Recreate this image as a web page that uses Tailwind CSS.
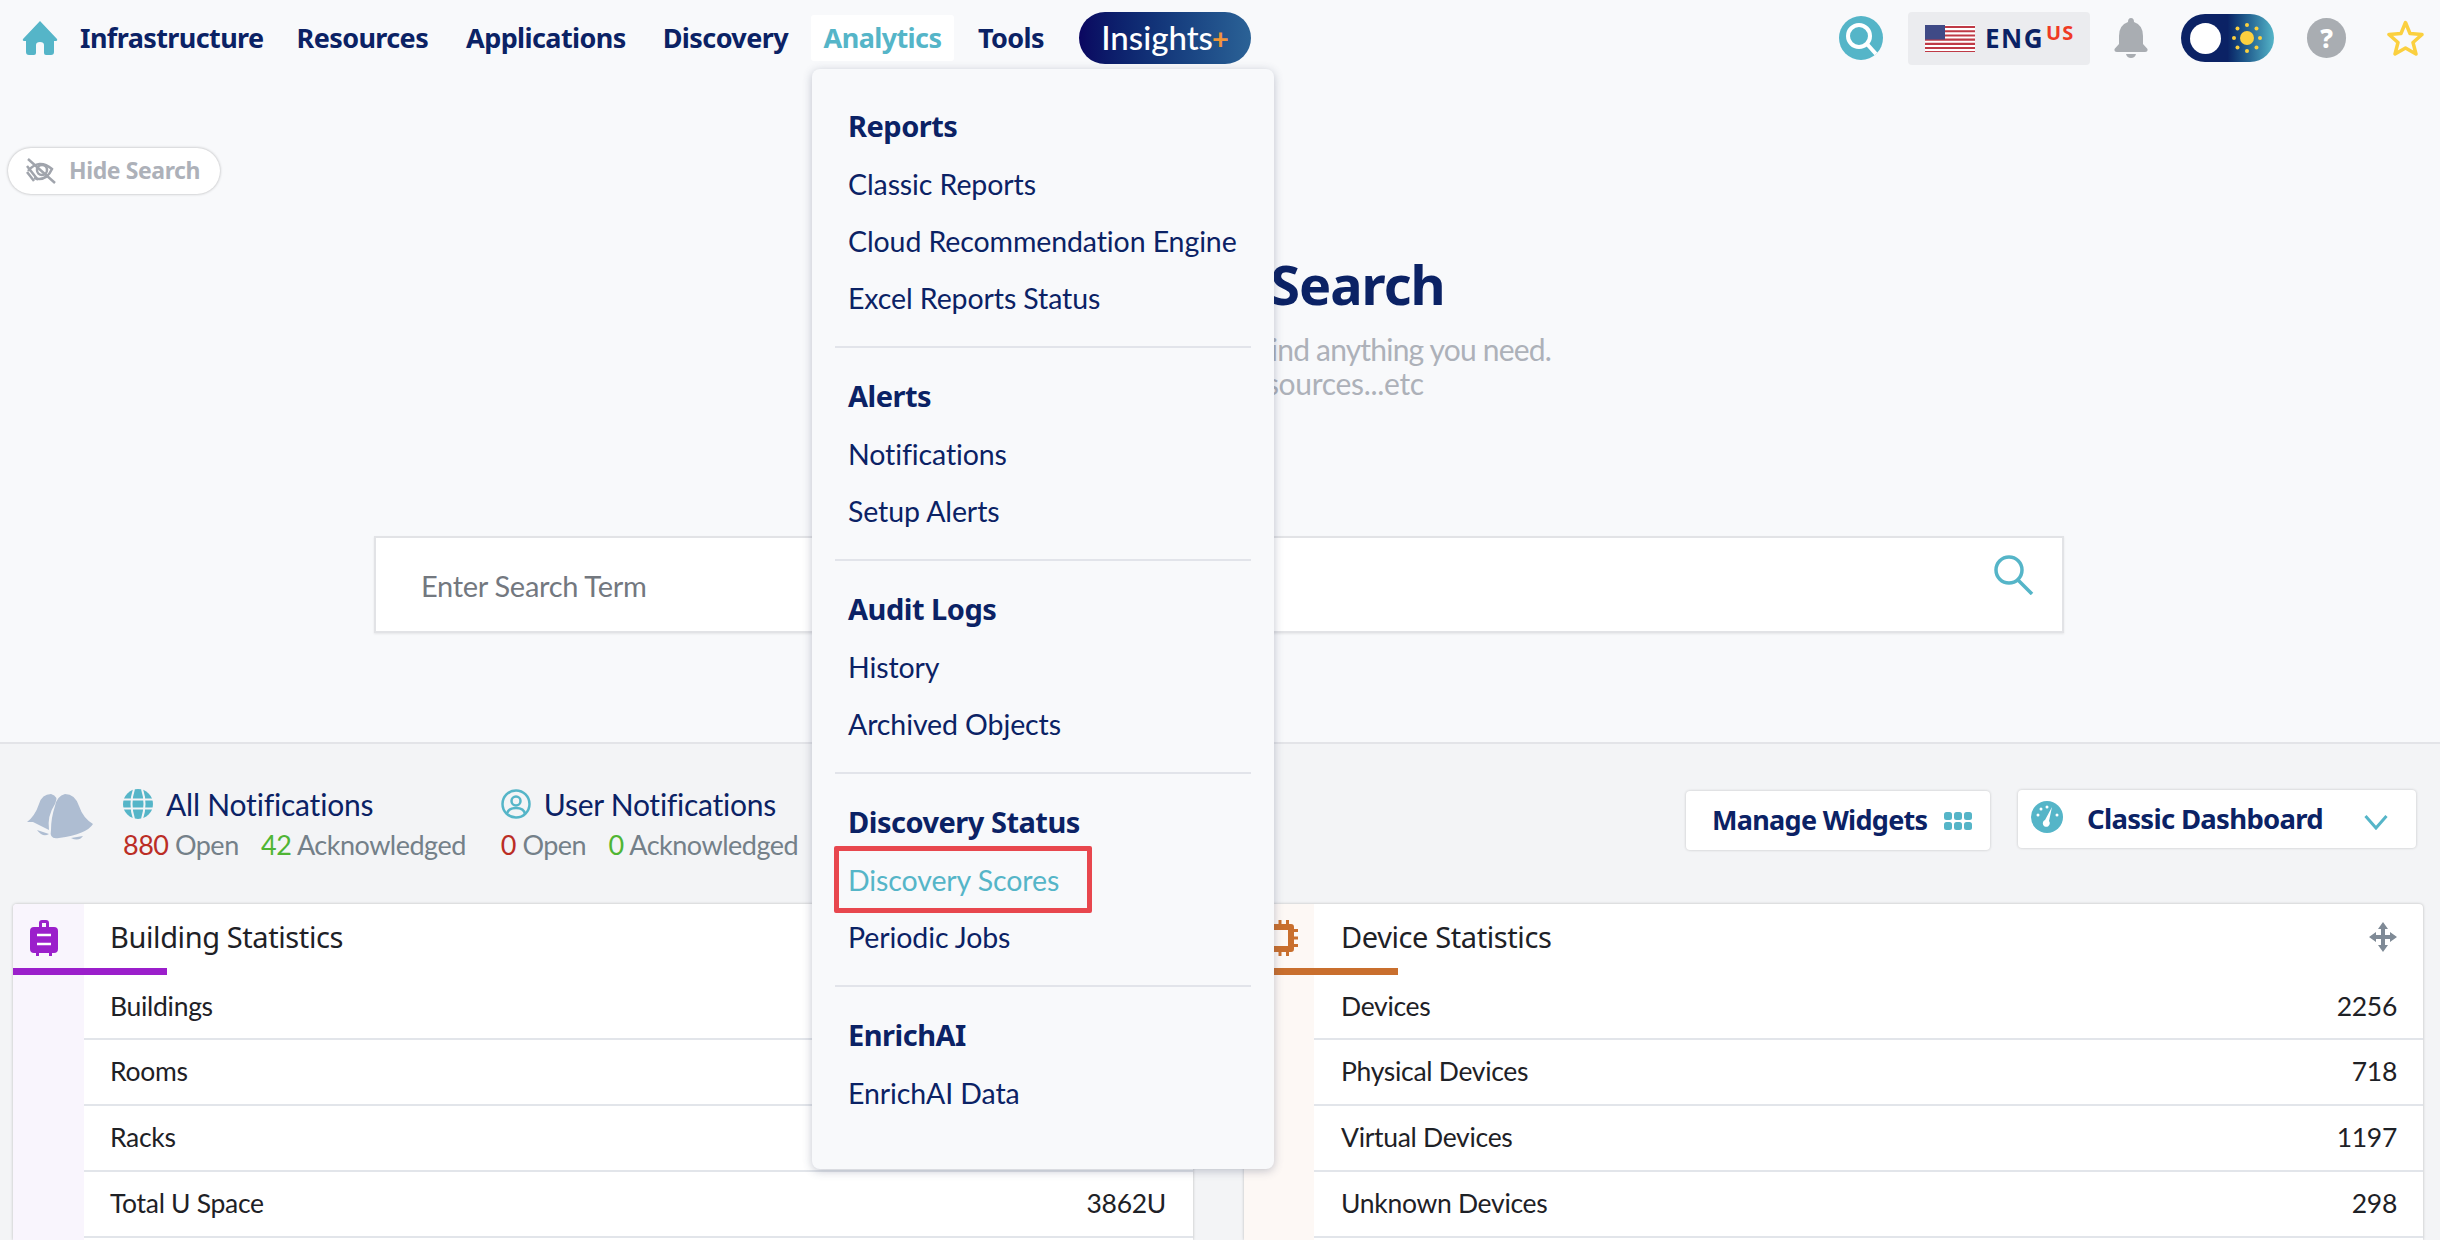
<!DOCTYPE html>
<html lang="en">
<head>
    <meta charset="UTF-8">
    <meta name="viewport" content="width=device-width, initial-scale=1.0">
    <title>Search</title>
    <script src="https://cdn.jsdelivr.net/npm/@tailwindcss/browser@4"></script>
</head>
<body class="bg-[#f8f9fb] font-['Lato',sans-serif] text-[#0b2265]">
<div class="relative w-[2440px] h-[1240px] overflow-hidden">

    <!-- top nav -->
    <header class="h-[76px] flex items-center pl-[22px] pr-[16px] font-['Noto_Sans',sans-serif] font-bold text-[27px] tracking-[-0.6px]">
        <svg class="w-[36px] h-[36px] mr-[22px]" viewBox="0 0 36 36" fill="#55b5c8"><path d="M18 1 L35 19 Q36 21 33 21 H32 V32 Q32 35 29 35 H24 Q22 35 22 33 V25 Q22 22 18 22 Q14 22 14 25 V33 Q14 35 12 35 H7 Q4 35 4 32 V21 H3 Q0 21 1 19 Z"/></svg>
        <a class="mr-[33px]">Infrastructure</a>
        <a class="mr-[38px]">Resources</a>
        <a class="mr-[37px]">Applications</a>
        <a class="mr-[23px]">Discovery</a>
        <a class="w-[143px] h-[46px] bg-white rounded-[3px] flex items-center justify-center text-[#55b5c8] mr-[24px]">Analytics</a>
        <a class="mr-[35px]">Tools</a>
        <div class="w-[172px] h-[52px] rounded-full bg-gradient-to-r from-[#0b0660] to-[#2b6296] flex items-center justify-center text-white font-medium text-[33px] font-['Lato',sans-serif] tracking-normal">Insights<span class="text-[#f0953a] font-bold -ml-[1px] text-[29px]">+</span></div>

        <div class="ml-auto flex items-center">
            <svg class="w-[44px] h-[44px]" viewBox="0 0 44 44"><circle cx="22" cy="22" r="22" fill="#55b5c8"/><circle cx="20" cy="20" r="11" fill="none" stroke="#fff" stroke-width="4"/><path d="M28 28 L37 38" stroke="#fff" stroke-width="4"/></svg>
            <div class="ml-[25px] w-[182px] h-[53px] rounded-[4px] bg-[#ebecef] flex items-center pl-[17px]">
                <svg class="w-[50px] h-[27px]" viewBox="0 0 50 27">
                    <rect width="50" height="27" fill="#fff"/>
                    <path d="M0 1h50v2.1H0zM0 5.2h50v2.1H0zM0 9.4h50v2.1H0zM0 13.6h50v2.1H0zM0 17.8h50v2.1H0zM0 22h50v2.1H0zM0 25.9h50V27H0z" fill="#bf3a46"/>
                    <rect width="20" height="14.5" fill="#3f4a86"/>
                </svg>
                <span class="ml-[10px] font-['Noto_Sans',sans-serif] font-bold text-[26px] tracking-[1.5px] text-[#0b2265]">ENG</span>
                <span class="ml-[2px] -mt-[10px] font-['Noto_Sans',sans-serif] font-bold text-[20px] tracking-[1px] text-[#ef3a25]">US</span>
            </div>
            <svg class="ml-[24px] w-[34px] h-[40px]" viewBox="0 0 34 40" fill="#a9adb2"><path d="M17 0 Q20 0 20 4 Q29 7 29 18 V26 L33.500 31 Q34 34 31 34 H3 Q0 34 0.500 31 L5 26 V18 Q5 7 14 4 Q14 0 17 0Z"/><path d="M12 36 H22 Q21 40 17 40 Q13 40 12 36Z"/></svg>
            <div class="ml-[33px] w-[93px] h-[48px] rounded-full bg-gradient-to-r from-[#0b2265] via-[#0b2265] to-[#55b5c8] flex items-center pl-[9px]">
                <div class="w-[31px] h-[31px] rounded-full bg-white"></div>
                <svg class="ml-[11px] w-[30px] h-[30px]" viewBox="0 0 30 30" fill="#fbd03f"><circle cx="15" cy="15" r="7"/><circle cx="15" cy="2" r="2"/><circle cx="15" cy="28" r="2"/><circle cx="2" cy="15" r="2"/><circle cx="28" cy="15" r="2"/><circle cx="5.500" cy="5.500" r="2"/><circle cx="24.500" cy="5.500" r="2"/><circle cx="5.500" cy="24.500" r="2"/><circle cx="24.500" cy="24.500" r="2"/></svg>
            </div>
            <div class="ml-[33px] w-[39px] h-[40px] rounded-full bg-[#a9adb2] flex items-center justify-center text-white font-['Noto_Sans',sans-serif] font-extrabold text-[26px] tracking-normal">?</div>
            <svg class="ml-[41px] w-[37px] h-[36px]" viewBox="0 0 37 36" fill="none" stroke="#fbd03f" stroke-width="3.500" stroke-linejoin="round"><path d="M18.500 2.500 L23 13.500 L35 14.500 L26 22.500 L29 34 L18.500 28 L8 34 L11 22.500 L2 14.500 L14 13.500 Z"/></svg>
        </div>
    </header>

    <!-- search hero -->
    <section class="h-[668px] border-b-2 border-[#e3e4e8] pt-[72px] flex flex-col">
        <div class="ml-[8px] w-[212px] h-[46px] rounded-full bg-white shadow-[0_0_3px_rgba(0,0,0,0.3)] flex items-center pl-[18px] pb-[1px] text-[#adb1b9] font-['Noto_Sans',sans-serif] font-bold text-[23px] tracking-[-0.4px]">
            <svg class="w-[30px] h-[26px] mr-[13px]" viewBox="0 0 30 26" fill="none" stroke="#a0a4ac" stroke-width="2.500"><path d="M2 13 Q13 0 26 11 Q20 24 8 20" /><circle cx="16" cy="12" r="5"/><path d="M2 1 L29 25" /><path d="M1 8 L12 22M1 14 L8 23" /></svg>
            Hide Search
        </div>
        <h1 class="mt-[60px] h-[60px] pl-[16px] text-center leading-[60px] font-['Noto_Sans',sans-serif] font-bold text-[54px] tracking-[-1px]">Universal Search</h1>
        <p class="mt-[18px] pl-[8px] text-center text-[#adb1b9] text-[30px] leading-[34px]">
            <span class="block pl-[11px] tracking-[-0.8px]">Use this global search bar to find anything you need.</span>
            <span class="block pr-[24px] tracking-[-0.3px]">Buildings, devices, resources...etc</span>
        </p>
        <div class="mt-[136px] ml-[374px] w-[1690px] h-[97px] bg-white border-2 border-[#e2e3e6] shadow-[0_1px_2px_rgba(0,0,0,0.08)] flex items-center pl-[45px] pr-[28px]">
            <span class="pt-[2px] text-[#73787f] text-[29px] tracking-[-0.3px]">Enter Search Term</span>
            <svg class="ml-auto -mt-[20px] w-[40px] h-[40px]" viewBox="0 0 40 40" fill="none" stroke="#55b5c8" stroke-width="3.500"><circle cx="15" cy="15" r="13"/><path d="M24 25 L38 39"/></svg>
        </div>
    </section>

    <!-- notifications + dashboard controls -->
    <section class="bg-[#f3f4f6] h-[496px]">
        <div class="h-[160px] flex items-start pl-[27px] pr-[24px]">
            <svg class="mt-[50px] w-[66px] h-[48px]" viewBox="0 0 66 48" fill="#aebdd2"><path d="M24 0 Q32 2 28 10 Q20 22 22 36 L6 28 L0 28 Q8 22 12 10 Q15 0 24 0Z"/><path d="M38 0 Q48 0 52 12 Q56 24 66 30 Q60 40 32 44 Q22 46 24 36 Q24 24 28 12 Q30 2 38 0Z"/><path d="M10 36 L22 40 Q16 44 10 36ZM44 44 L56 42 Q52 48 44 44Z"/></svg>
            <div class="ml-[30px] mt-[44px]">
                <div class="flex items-center h-[32px]">
                    <svg class="w-[30px] h-[30px] mr-[13px]" viewBox="0 0 30 30" fill="#55b5c8"><circle cx="15" cy="15" r="15"/><path d="M0 10.500H30M0 19.500H30M11 0Q6 15 11 30M19 0Q24 15 19 30" stroke="#f3f4f6" stroke-width="2" fill="none"/></svg>
                    <span class="text-[30px] tracking-[-0.2px]">All Notifications</span>
                </div>
                <div class="mt-[9px] text-[27px] leading-[32px] tracking-[-0.5px] text-[#748089] whitespace-nowrap"><span class="text-[#bb2d25]">880</span> Open <span class="ml-[16px] text-[#4fb534]">42</span> Acknowledged</div>
            </div>
            <div class="ml-[35px] mt-[44px]">
                <div class="flex items-center h-[32px]">
                    <svg class="w-[30px] h-[30px] mr-[13px]" viewBox="0 0 30 30" fill="none" stroke="#55b5c8" stroke-width="2.500"><circle cx="15" cy="15" r="13.500"/><circle cx="15" cy="12" r="4.500"/><path d="M6 25 Q7 19 15 19 Q23 19 24 25"/></svg>
                    <span class="text-[30px] tracking-[-0.25px]">User Notifications</span>
                </div>
                <div class="mt-[9px] text-[27px] leading-[32px] tracking-[-0.5px] text-[#748089] whitespace-nowrap"><span class="text-[#bb2d25]">0</span> Open <span class="ml-[16px] text-[#4fb534]">0</span> Acknowledged</div>
            </div>
            <div class="ml-auto mt-[47px] flex items-start font-['Noto_Sans',sans-serif] font-bold text-[27px] tracking-[-0.7px]">
                <div class="w-[304px] h-[59px] bg-white rounded-[4px] shadow-[0_0_3px_rgba(0,0,0,0.2)] flex items-center pl-[26px]">
                    Manage Widgets
                    <svg class="ml-[17px] w-[28px] h-[18px]" viewBox="0 0 28 18" fill="#55b5c8"><rect width="8" height="8" rx="2.500"/><rect x="10" width="8" height="8" rx="2.500"/><rect x="20" width="8" height="8" rx="2.500"/><rect y="10" width="8" height="8" rx="2.500"/><rect x="10" y="10" width="8" height="8" rx="2.500"/><rect x="20" y="10" width="8" height="8" rx="2.500"/></svg>
                </div>
                <div class="ml-[28px] w-[398px] h-[58px] -mt-[1px] bg-white rounded-[4px] shadow-[0_0_3px_rgba(0,0,0,0.2)] flex items-center pl-[13px] pr-[28px]">
                    <svg class="w-[32px] h-[32px] -mt-[4px] mr-[24px]" viewBox="0 0 32 32"><circle cx="16" cy="16" r="16" fill="#55b5c8"/><path d="M21 6 L18 20 A3.500 3.500 0 1 1 14 19 Z" fill="#fff"/><circle cx="7" cy="14" r="1.500" fill="#fff"/><circle cx="10" cy="8" r="1.500" fill="#fff"/><circle cx="16" cy="6" r="1.500" fill="#fff"/><circle cx="26" cy="14" r="1.500" fill="#fff"/></svg>
                    <span class="text-[27.5px]">Classic Dashboard</span>
                    <svg class="ml-auto mt-[6px] w-[24px] h-[15px]" viewBox="0 0 24 15" fill="none" stroke="#55b5c8" stroke-width="3"><path d="M1.500 1 L12 13 L22.500 1"/></svg>
                </div>
            </div>
        </div>

        <div class="flex pl-[13px] items-start gap-[51px]">
            <div class="w-[1180px] h-[336px] bg-white rounded-t-[4px] shadow-[0_0_3px_rgba(0,0,0,0.25)] relative overflow-hidden flex">
                <div class="w-[71px] bg-[#f9f5fd] shrink-0 flex justify-center pt-[16px] pr-[9px]">
                    <svg class="w-[28px] h-[36px]" viewBox="0 0 28 36" fill="#9b1fcb"><path d="M9 7 V3 Q9 0 12 0 H16 Q19 0 19 3 V7 H24 Q28 7 28 11 V29 Q28 33 24 33 H22 V36 H19 V33 H9 V36 H6 V33 H4 Q0 33 0 29 V11 Q0 7 4 7Z M12 7 H16 V3 H12Z"/><path d="M7 15 H21M7 24 H21" stroke="#fff" stroke-width="2.500"/></svg>
                </div>
                <div class="absolute left-0 top-[64px] w-[154px] h-[7px] bg-[#9b1fcb]"></div>
                <div class="flex-1 text-[26.5px] tracking-[-0.3px] text-[#1e2126]">
                    <div class="h-[71px] pl-[26px] pb-[5px] flex items-center text-[#1e2126] font-['Noto_Sans',sans-serif] text-[29px] tracking-[-0.4px]">Building Statistics</div>
                    <div class="h-[65px] pl-[26px] pr-[27px] border-b-2 border-[#e2e5ea] flex items-center justify-between"><span>Buildings</span></div>
                    <div class="h-[66px] pl-[26px] pr-[27px] border-b-2 border-[#e2e5ea] flex items-center justify-between"><span>Rooms</span></div>
                    <div class="h-[66px] pl-[26px] pr-[27px] border-b-2 border-[#e2e5ea] flex items-center justify-between"><span>Racks</span></div>
                    <div class="h-[66px] pl-[26px] pr-[27px] border-b-2 border-[#e2e5ea] flex items-center justify-between"><span>Total U Space</span><span>3862U</span></div>
                </div>
            </div>
            <div class="w-[1179px] h-[336px] bg-white rounded-t-[4px] shadow-[0_0_3px_rgba(0,0,0,0.25)] relative overflow-hidden flex">
                <div class="w-[70px] bg-[#fdf8f5] shrink-0 pt-[16px] pl-[18px]">
                    <svg class="w-[36px] h-[36px]" viewBox="0 0 36 36" fill="#c96f2e"><path fill-rule="evenodd" d="M7 4 H29 Q32 4 32 7 V29 Q32 32 29 32 H7 Q4 32 4 29 V7 Q4 4 7 4Z M10 10 V26 H26 V10Z"/><path d="M9 0h3v4H9zM16.500 0h3v4h-3zM24 0h3v4h-3zM9 32h3v4H9zM16.500 32h3v4h-3zM24 32h3v4h-3zM0 9h4v3H0zM0 16.500h4v3H0zM0 24h4v3H0zM32 9h4v3h-4zM32 16.500h4v3h-4zM32 24h4v3h-4z"/></svg>
                </div>
                <div class="absolute left-0 top-[64px] w-[154px] h-[7px] bg-[#c96f2e]"></div>
                <div class="flex-1 text-[26.5px] tracking-[-0.3px] text-[#1e2126]">
                    <div class="h-[71px] pl-[27px] pr-[26px] pb-[5px] flex items-center justify-between font-['Noto_Sans',sans-serif] text-[29px] tracking-[-0.4px]">Device Statistics
                        <svg class="w-[28px] h-[30px]" viewBox="0 0 28 30" fill="#7f8a96"><path d="M14 0 L19 7 H16 V13 H21 V10 L28 15 L21 20 V17 H16 V23 H19 L14 30 L9 23 H12 V17 H7 V20 L0 15 L7 10 V13 H12 V7 H9 Z"/></svg>
                    </div>
                    <div class="h-[65px] pl-[27px] pr-[26px] border-b-2 border-[#e2e5ea] flex items-center justify-between"><span>Devices</span><span>2256</span></div>
                    <div class="h-[66px] pl-[27px] pr-[26px] border-b-2 border-[#e2e5ea] flex items-center justify-between"><span>Physical Devices</span><span>718</span></div>
                    <div class="h-[66px] pl-[27px] pr-[26px] border-b-2 border-[#e2e5ea] flex items-center justify-between"><span>Virtual Devices</span><span>1197</span></div>
                    <div class="h-[66px] pl-[27px] pr-[26px] border-b-2 border-[#e2e5ea] flex items-center justify-between"><span>Unknown Devices</span><span>298</span></div>
                </div>
            </div>
        </div>
    </section>

    <!-- Analytics dropdown -->
    <div class="absolute left-[812px] top-[69px] w-[462px] h-[1100px] bg-[#f8f9fb] rounded-[8px] shadow-[0_2px_10px_rgba(60,70,100,0.3)] pt-[29px] text-[28.5px] tracking-[-0.1px]">
        <div class="h-[57px] pl-[36px] pb-[1px] flex items-center font-['Noto_Sans',sans-serif] font-bold text-[29px] tracking-[-0.5px]">Reports</div>
        <a class="h-[57px] pl-[36px] pt-[2px] flex items-center">Classic Reports</a>
        <a class="h-[57px] pl-[36px] pt-[2px] flex items-center">Cloud Recommendation Engine</a>
        <a class="h-[57px] pl-[36px] pt-[2px] flex items-center">Excel Reports Status</a>
        <div class="mx-[23px] mt-[20px] mb-[20px] h-[2px] bg-[#e2e4ea]"></div>
        <div class="h-[57px] pl-[36px] pb-[1px] flex items-center font-['Noto_Sans',sans-serif] font-bold text-[29px] tracking-[-0.5px]">Alerts</div>
        <a class="h-[57px] pl-[36px] pt-[2px] flex items-center">Notifications</a>
        <a class="h-[57px] pl-[36px] pt-[2px] flex items-center">Setup Alerts</a>
        <div class="mx-[23px] mt-[20px] mb-[20px] h-[2px] bg-[#e2e4ea]"></div>
        <div class="h-[57px] pl-[36px] pb-[1px] flex items-center font-['Noto_Sans',sans-serif] font-bold text-[29px] tracking-[-0.5px]">Audit Logs</div>
        <a class="h-[57px] pl-[36px] pt-[2px] flex items-center">History</a>
        <a class="h-[57px] pl-[36px] pt-[2px] flex items-center">Archived Objects</a>
        <div class="mx-[23px] mt-[20px] mb-[20px] h-[2px] bg-[#e2e4ea]"></div>
        <div class="h-[57px] pl-[36px] pb-[1px] flex items-center font-['Noto_Sans',sans-serif] font-bold text-[29px] tracking-[-0.5px]">Discovery Status</div>
        <a class="relative h-[57px] pl-[36px] pt-[2px] flex items-center text-[#55b5c8]">Discovery Scores
            <span class="absolute left-[22px] top-[-5px] w-[258px] h-[67px] border-[5px] border-[#e8474e] rounded-[2px]"></span>
        </a>
        <a class="h-[57px] pl-[36px] pt-[2px] flex items-center">Periodic Jobs</a>
        <div class="mx-[23px] mt-[20px] mb-[20px] h-[2px] bg-[#e2e4ea]"></div>
        <div class="h-[57px] pl-[36px] pb-[1px] flex items-center font-['Noto_Sans',sans-serif] font-bold text-[29px] tracking-[-0.5px]">EnrichAI</div>
        <a class="h-[57px] pl-[36px] pt-[2px] flex items-center">EnrichAI Data</a>
    </div>
</div>
</body>
</html>
